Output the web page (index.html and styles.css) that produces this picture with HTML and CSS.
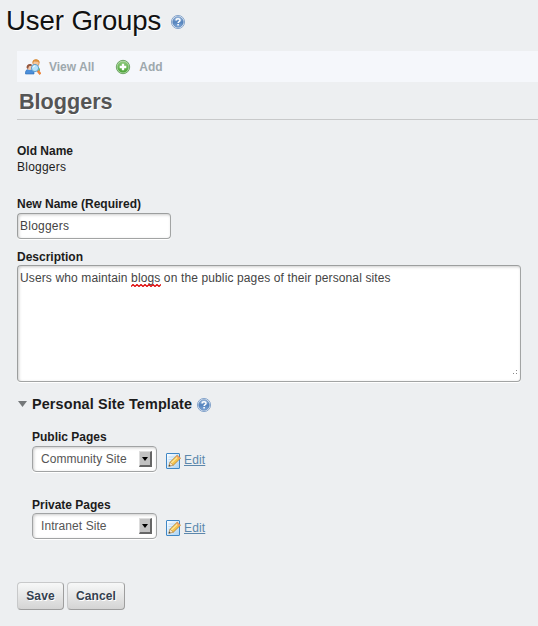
FILE: index.html
```html
<!DOCTYPE html>
<html lang="en">
<head>
<meta charset="utf-8">
<title>User Groups</title>
<link rel="stylesheet" href="styles.css">
</head>
<body>
<svg width="0" height="0" class="defs">
  <defs>
    <linearGradient id="blue" x1="0" y1="0" x2="0" y2="1"><stop offset="0" stop-color="#a3bfe1"/><stop offset=".5" stop-color="#5483bd"/><stop offset="1" stop-color="#82a9d9"/></linearGradient>
    <linearGradient id="green" x1="0" y1="0" x2="0" y2="1"><stop offset="0" stop-color="#8fca7c"/><stop offset="1" stop-color="#4aa436"/></linearGradient>
    <linearGradient id="paper" x1="0" y1="0" x2="1" y2="1"><stop offset="0" stop-color="#fff"/><stop offset="1" stop-color="#a9d2f4"/></linearGradient>
    <symbol id="help" viewBox="0 0 16 16">
      <circle cx="8" cy="8" r="6.6" fill="#e7eef7" stroke="#7f9fc8" stroke-width=".9"/>
      <circle cx="8" cy="8" r="5.3" fill="url(#blue)" stroke="#507cb2" stroke-width=".6"/>
      <path d="M6.1 6.5C6.1 4.3 10 4.3 10 6.4C10 7.7 8.1 7.5 8.1 9.1" fill="none" stroke="#fff" stroke-width="1.5"/>
      <rect x="7.3" y="10" width="1.6" height="1.5" fill="#fff"/>
    </symbol>
    <symbol id="edit" viewBox="0 0 16 16">
      <rect x="1.5" y=".5" width="13" height="15" rx=".5" fill="url(#paper)" stroke="#3f87c6"/>
      <path d="M3.5 4h7M3.5 6.5h5M3.5 9h3" stroke="#c1dcf2" fill="none"/>
      <path d="M3.9 13.2L5.1 9.2L12.2 2.2L15.5 5.2L8.3 12.2Z" fill="#f5c44f" stroke="#b5802e" stroke-width=".8"/>
      <path d="M6.3 10L13.2 3.4" stroke="#ffe99b" stroke-width="1.2"/>
      <path d="M12.2 2.2L15.5 5.2L14.3 6.3L11.1 3.2Z" fill="#ed9d68"/>
      <path d="M3.9 13.2L5.1 9.2L8.3 12.2Z" fill="#f8e4c4" stroke="#a78455" stroke-width=".5"/>
      <path d="M3.7 13.4L4.3 11.6L5.6 12.8Z" fill="#444"/>
    </symbol>
  </defs>
</svg>
<header class="title"><h1>User Groups</h1><svg class="icon"><use href="#help"/></svg></header>
<main>
  <nav class="toolbar">
    <a class="tool view"><svg class="icon" viewBox="0 0 16 16">
      <path d="M8 9C9 7.5 13.5 7 15 10V12H8Z" fill="#76b66c"/>
      <circle cx="11" cy="4" r="3.2" fill="#f5c69b" stroke="#c67c34" stroke-width=".6"/>
      <path d="M7.4 4C7.2-.8 14.6-.9 14.7 4L13 2.8L9.3 2.6Z" fill="#dc913d"/>
      <path d="M.5 15V13C1 10.5 3 10 6 10.5L9 12V15Z" fill="#4b8fdb" stroke="#2969b4" stroke-width=".6"/>
      <circle cx="4.6" cy="8.3" r="2.7" fill="#f5c8ac"/>
      <path d="M1.6 9C1 4.3 6.7 4 7.6 6.6L4 7.2L3 10Z" fill="#925740"/>
      <path d="M12.5 11.5L15.5 15.2" stroke="#ed863d" stroke-width="2.5"/>
      <circle cx="10" cy="9" r="3.6" fill="#b5e3fc" stroke="#5f9fcc" stroke-width="1"/>
      <path d="M8 8.6Q8.4 6.9 10 6.9" stroke="#fff" fill="none"/>
    </svg><span>View All</span></a>
    <a class="tool"><svg class="icon" viewBox="0 0 16 16">
      <circle cx="8" cy="8" r="6.7" fill="#b9dbb0" stroke="#55974a" stroke-width=".8"/>
      <circle cx="8" cy="8" r="5.6" fill="url(#green)"/>
      <path d="M8 4.7V11.3M4.7 8H11.3" stroke="#fff" stroke-width="2.3"/>
    </svg><span>Add</span></a>
  </nav>
  <h2>Bloggers</h2>
  <form>
    <section class="old"><label>Old Name</label><div class="value">Bloggers</div></section>
    <section class="new"><label>New Name (Required)</label><div class="input value">Bloggers</div></section>
    <section class="description"><label>Description</label><div class="input area">Users who maintain <span class="misspelled">blogs<svg class="squiggle" viewBox="0 0 30 3"><path d="M0 2.5L2 .5L4 2.5L6 .5L8 2.5L10 .5L12 2.5L14 .5L16 2.5L18 .5L20 2.5L22 .5L24 2.5L26 .5L28 2.5L30 .5"/></svg></span> on the public pages of their personal sites<svg class="grip" viewBox="0 0 4 4"><path d="M0 3h1v1H0zM3 3h1v1H3zM3 0h1v1H3z"/></svg></div></section>
    <h3><svg class="toggle" viewBox="0 0 9 6"><path d="M0 0H9L4.5 6Z"/></svg><span>Personal Site Template</span><svg class="icon"><use href="#help"/></svg></h3>
    <section class="template"><label>Public Pages</label><div class="choice"><div class="select"><span>Community Site</span><i class="arrow"></i></div><svg class="icon"><use href="#edit"/></svg><a class="link">Edit</a></div></section>
    <section class="template private"><label>Private Pages</label><div class="choice"><div class="select"><span>Intranet Site</span><i class="arrow"></i></div><svg class="icon"><use href="#edit"/></svg><a class="link">Edit</a></div></section>
    <div class="buttons"><button type="button">Save</button><button type="button">Cancel</button></div>
  </form>
</main>
</body>
</html>
```
FILE: styles.css
```css
* { box-sizing: border-box; }
body { margin: 0; height: 626px; overflow: hidden; background: #edeff1; color: #1c1c1c; font: 12px/16px "Liberation Sans", Arial, sans-serif; }
.defs { position: absolute; }
.icon { display: block; width: 16px; height: 16px; flex: none; }
.title { display: flex; height: 51px; padding: 4px 0 0 6px; }
.title h1 { margin: 0; font-size: 27.6px; letter-spacing: -.1px; line-height: 34px; font-weight: 400; color: #111; text-shadow: 1px 1px #fff; }
.title .icon { margin: 10px 0 0 9px; }
main { padding-left: 17px; }
.toolbar { display: flex; align-items: center; height: 31px; padding-left: 8px; background: #f5f7fb; color: #9ea8ad; font-weight: 700; }
.tool { display: flex; gap: 8px; }
.view { margin-right: 21px; }
h2 { margin: 0 0 23px; height: 38px; padding: 7px 0 0 2px; border-bottom: 1px solid #c8c9ca; font-size: 21.6px; line-height: 26px; color: #555; text-shadow: 1px 1px #fff; }
label { display: block; font-weight: 700; }
.old, .new { height: 53px; }
.input { position: relative; width: 154px; height: 26px; margin-top: 1px; padding: 4px 2px; border: 1px solid; border-color: #9c9e9e #a2a4a4 #a2a4a4 #9c9e9e; border-radius: 4px; background: #fff; color: #444; box-shadow: inset 1px 1px 3px #ccc, 0 1px #fff; }
.value { letter-spacing: .23px; }
.area { width: 504px; height: 117px; margin-top: 0; letter-spacing: .125px; }
.misspelled { position: relative; }
.squiggle { position: absolute; left: 0; bottom: -2px; width: 30px; height: 3px; fill: none; stroke: #d00; stroke-width: 1.2; }
.grip { position: absolute; right: 3px; bottom: 7px; width: 4px; height: 4px; fill: #888; shape-rendering: crispEdges; }
h3 { display: flex; align-items: center; height: 18px; margin: 13px 0 16px; font-size: 14.4px; letter-spacing: .13px; line-height: 18px; }
.toggle { width: 9px; height: 6px; margin: 0 5px 0 1px; fill: #747779; }
h3 .icon { margin: 1px 0 0 4px; }
.template { height: 68px; margin-left: 15px; }
.choice { display: flex; margin-top: 1px; }
.select { display: flex; justify-content: space-between; width: 125px; height: 26px; padding: 4px 4px 0 8px; border: 1px solid #a1a3a4; border-radius: 4px; background: #fff; color: #555; letter-spacing: .07px; box-shadow: inset 1px 1px 3px #ccc, 0 1px #fff; }
.arrow { position: relative; width: 13px; height: 16px; border: 1px solid; border-color: #ddd #666 #666 #ddd; border-right-width: 2px; border-bottom-width: 2px; background: #c2c2c2; }
.arrow::after { content: ""; position: absolute; left: 2px; top: 5px; border: 3px solid transparent; border-top: 4px solid #000; border-bottom: 0; }
.choice > .icon { margin: 7px 2px 0 8px; }
.link { height: 15px; margin: 6px 0 0 1px; color: #5b87ac; letter-spacing: .15px; text-decoration: underline; }
.private .choice { margin-top: 0; }
.private .link { margin-top: 7px; }
.buttons { display: flex; gap: 3px; margin-top: 17px; }
button { width: 47px; height: 28px; padding: 0; border: 1px solid; border-color: #c8c9ca #9e9e9e #9e9e9e #c8c9ca; border-radius: 4px; background: linear-gradient(#f7f8f8, #d4d4d4); color: #34404f; font: 700 12px "Liberation Sans", Arial, sans-serif; letter-spacing: .12px; text-shadow: 1px 1px #fff; }
button + button { width: 58px; }
```
